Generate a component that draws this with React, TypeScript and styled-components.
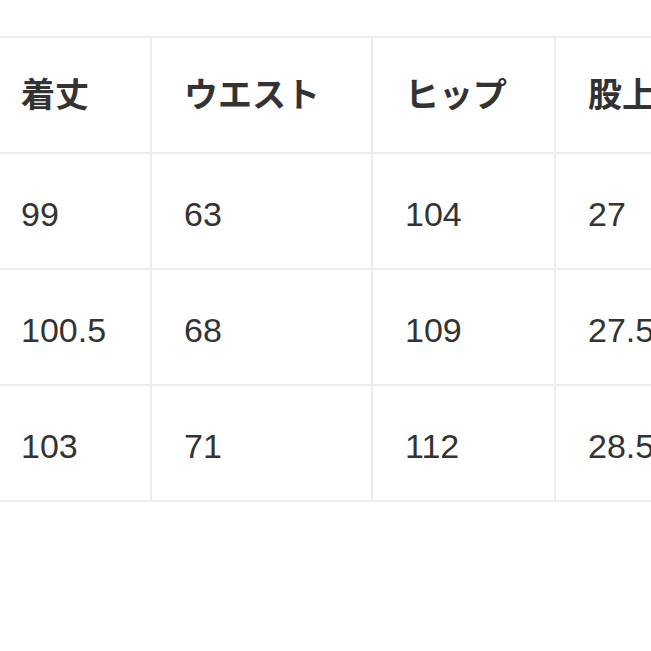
import styled, { createGlobalStyle } from "styled-components";

const GlobalStyle = createGlobalStyle`
  html, body {
    margin: 0;
    padding: 0;
    background: #ffffff;
  }
  body {
    width: 651px;
    height: 651px;
    overflow: hidden;
  }
`;

const Page = styled.div`
  width: 651px;
  height: 651px;
  overflow: hidden;
  background: #ffffff;
  padding-top: 36px;
  box-sizing: border-box;
`;

const SizeTable = styled.div`
  display: grid;
  grid-template-columns: 161px 219px 181px 200px;
  grid-auto-rows: 114px;
  gap: 2px;
  padding: 2px;
  background: #ededed;
  margin-left: -13px;
  width: max-content;
`;

const Cell = styled.div<{ $head?: boolean }>`
  background: #ffffff;
  display: flex;
  align-items: center;
  padding: ${(p) => (p.$head ? "0 0 6px 32px" : "6px 0 0 32px")};
  box-sizing: border-box;
  color: #333333;
  white-space: nowrap;
  font-family: ${(p) =>
    p.$head
      ? '"Noto Sans CJK JP", sans-serif'
      : '"Liberation Sans", Arial, sans-serif'};
  font-size: ${(p) => (p.$head ? "34px" : "34px")};
  font-weight: ${(p) => (p.$head ? 700 : 400)};
`;

const headers = ["着丈", "ウエスト", "ヒップ", "股上"];

const rows = [
  ["99", "63", "104", "27"],
  ["100.5", "68", "109", "27.5"],
  ["103", "71", "112", "28.5"],
];

export default function App() {
  return (
    <Page>
      <GlobalStyle />
      <SizeTable>
        {headers.map((h) => (
          <Cell $head key={h}>
            {h}
          </Cell>
        ))}
        {rows.map((row, i) =>
          row.map((v, j) => <Cell key={`${i}-${j}`}>{v}</Cell>)
        )}
      </SizeTable>
    </Page>
  );
}
